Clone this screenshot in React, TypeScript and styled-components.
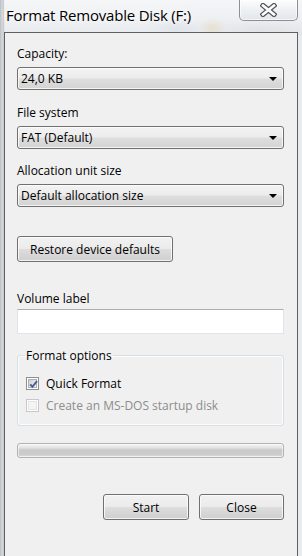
import React from 'react'
import styled, { createGlobalStyle } from 'styled-components'

const GlobalStyle = createGlobalStyle`
  html, body {
    margin: 0;
    padding: 0;
    background: #e4e7ea;
  }
  body {
    font-family: 'Open Sans', 'Noto Sans', 'Liberation Sans', sans-serif;
    font-size: 12px;
    color: #000;
  }
`

const Window = styled.div`
  width: 302px;
  height: 556px;
  display: flex;
  flex-flow: column nowrap;
  overflow: hidden;
  background:
    radial-gradient(ellipse 14px 10px at 212px 27px, rgba(220, 170, 90, 0.55), rgba(220, 170, 90, 0) 100%),
    radial-gradient(ellipse 30px 10px at 178px 28px, rgba(150, 175, 205, 0.35), rgba(150, 175, 205, 0) 100%),
    radial-gradient(ellipse 60px 12px at 262px 29px, rgba(170, 170, 170, 0.35), rgba(170, 170, 170, 0) 100%),
    linear-gradient(90deg, #b9bcc0 0px, #d6d8da 2px, #c4c6c9 4px, #eceef0 5px, #e9ebee 100%);
`

const TitleBar = styled.div`
  height: 32px;
  flex: 0 0 32px;
  display: flex;
  flex-flow: row nowrap;
  justify-content: space-between;
  align-items: flex-start;
  background: linear-gradient(180deg, rgba(246, 247, 249, 0.9) 0%, rgba(232, 235, 238, 0.6) 100%);
  margin-left: 4px;
`

const Title = styled.div`
  padding: 5px 0 0 2px;
  font-size: 15px;
  line-height: 20px;
  color: #000;
  text-shadow: 0 0 6px #fff, 0 0 10px #fff;
  letter-spacing: -0.2px;
`

const CloseButton = styled.div`
  width: 57px;
  height: 20px;
  margin-right: 4px;
  border: 1px solid #8b9098;
  border-top: none;
  border-radius: 0 0 5px 5px;
  background: linear-gradient(180deg, rgba(255, 255, 255, 0.75) 0%, rgba(235, 238, 242, 0.55) 50%, rgba(215, 220, 226, 0.5) 100%);
  box-shadow: inset 0 0 0 1px rgba(255, 255, 255, 0.6);
  display: flex;
  align-items: center;
  justify-content: center;
`

const Client = styled.div`
  flex: 1 1 auto;
  margin: 0 4px 0 4px;
  border: 1px solid #5c6066;
  border-bottom: none;
  background: #f0f0f0;
  padding: 13px 13px 0 12px;
  display: flex;
  flex-flow: column nowrap;
`

const Label = styled.div<{ gap?: number }>`
  height: 15px;
  line-height: 15px;
  margin-top: ${(p) => p.gap ?? 0}px;
  white-space: nowrap;
`

const Combo = styled.div`
  height: 23px;
  box-sizing: border-box;
  margin-top: 6px;
  border: 1px solid #707070;
  border-radius: 3px;
  background: linear-gradient(180deg, #f3f3f3 0%, #ececec 48%, #dedede 52%, #d3d3d3 100%);
  box-shadow: inset 0 0 0 1px rgba(255, 255, 255, 0.75);
  display: flex;
  align-items: center;
  justify-content: space-between;
  padding: 0 6px 0 3px;
  line-height: 15px;
`

const Arrow = styled.span`
  width: 0;
  height: 0;
  border-left: 4px solid transparent;
  border-right: 4px solid transparent;
  border-top: 4px solid #000;
`

const Button = styled.div<{ w: number; gap?: number }>`
  width: ${(p) => p.w}px;
  height: 26px;
  box-sizing: border-box;
  margin-top: ${(p) => p.gap ?? 0}px;
  border: 1px solid #707070;
  border-radius: 3px;
  background: linear-gradient(180deg, #f2f2f2 0%, #ebebeb 48%, #dddddd 52%, #cfcfcf 100%);
  box-shadow: inset 0 0 0 1px rgba(255, 255, 255, 0.75);
  display: flex;
  align-items: center;
  justify-content: center;
  line-height: 15px;
  white-space: nowrap;
`

const TextInput = styled.input`
  display: block;
  height: 25px;
  box-sizing: border-box;
  margin: 3px 0 0 0;
  width: 100%;
  border: 1px solid #e2e3ea;
  border-top-color: #abadb3;
  border-radius: 1px;
  background: #fff;
  outline: none;
  font: inherit;
`

const Group = styled.fieldset`
  margin: 14px 0 0 0;
  padding: 9px 8px 9px 8px;
  border: 1px solid #d5dfe5;
  border-radius: 3px;
  box-shadow: inset 0 0 0 1px rgba(255, 255, 255, 0.8);
  min-width: 0;
`

const Legend = styled.legend`
  padding: 0 1px;
  margin-left: -1px;
  line-height: 15px;
`

const CheckRow = styled.label<{ disabled?: boolean }>`
  height: 22px;
  display: flex;
  align-items: center;
  gap: 7px;
  color: ${(p) => (p.disabled ? '#8d8d8d' : '#000')};
  line-height: 15px;
`

const Box = styled.span<{ disabled?: boolean }>`
  width: 13px;
  height: 13px;
  box-sizing: border-box;
  border: 1px solid ${(p) => (p.disabled ? '#c7c7c7' : '#8e8f8f')};
  background: #fff;
  padding: 1px;
  display: flex;
  position: relative;
`

const BoxInner = styled.span<{ disabled?: boolean }>`
  flex: 1;
  border: 1px solid ${(p) => (p.disabled ? '#e3e3e3' : '#aeb3b9')};
  background: ${(p) =>
    p.disabled ? '#f4f4f4' : 'linear-gradient(135deg, #cbcfd5 0%, #f6f6f6 100%)'};
`

const Tick = styled.svg`
  position: absolute;
  left: 0;
  top: 0;
`

const Progress = styled.div`
  margin-top: 17px;
  height: 15px;
  box-sizing: border-box;
  border: 1px solid #b2b2b2;
  border-radius: 3px;
  background: linear-gradient(180deg, #f3f3f3 0%, #e2e2e2 30%, #c9c9c9 45%, #cbcbcb 80%, #dedede 100%);
  box-shadow: inset 0 0 0 1px rgba(255, 255, 255, 0.6);
`

const ButtonRow = styled.div`
  margin-top: 36px;
  display: flex;
  justify-content: flex-end;
  gap: 10px;
`

const CloseGlyph = () => (
  <svg width="17" height="14" viewBox="0 0 17 14">
    <path d="M3 2.5 L14 11.5 M14 2.5 L3 11.5" stroke="#4f535b" strokeWidth="5" strokeLinecap="square" />
    <path d="M3 2.5 L14 11.5 M14 2.5 L3 11.5" stroke="#fff" strokeWidth="2.6" strokeLinecap="square" />
  </svg>
)

const CheckBox: React.FC<{ checked?: boolean; disabled?: boolean }> = ({ checked, disabled }) => (
  <Box disabled={disabled}>
    <BoxInner disabled={disabled} />
    {checked && (
      <Tick width="13" height="13" viewBox="0 0 13 13">
        <path d="M3.2 6.3 L5.4 8.8 L10 3.2" fill="none" stroke="#4b5f92" strokeWidth="2" />
      </Tick>
    )}
  </Box>
)

const App: React.FC = () => {
  return (
    <>
      <GlobalStyle />
      <Window>
        <TitleBar>
          <Title>Format Removable Disk (F:)</Title>
          <CloseButton>
            <CloseGlyph />
          </CloseButton>
        </TitleBar>
        <Client>
          <Label>Capacity:</Label>
          <Combo>
            <span>24,0 KB</span>
            <Arrow />
          </Combo>
          <Label gap={15}>File system</Label>
          <Combo>
            <span>FAT (Default)</span>
            <Arrow />
          </Combo>
          <Label gap={14}>Allocation unit size</Label>
          <Combo>
            <span>Default allocation size</span>
            <Arrow />
          </Combo>
          <Button w={156} gap={29}>
            Restore device defaults
          </Button>
          <Label gap={29}>Volume label</Label>
          <TextInput defaultValue="" />
          <Group>
            <Legend>Format options</Legend>
            <CheckRow>
              <CheckBox checked />
              Quick Format
            </CheckRow>
            <CheckRow disabled>
              <CheckBox disabled />
              Create an MS-DOS startup disk
            </CheckRow>
          </Group>
          <Progress />
          <ButtonRow>
            <Button w={86}>Start</Button>
            <Button w={85}>Close</Button>
          </ButtonRow>
        </Client>
      </Window>
    </>
  )
}

export default App
